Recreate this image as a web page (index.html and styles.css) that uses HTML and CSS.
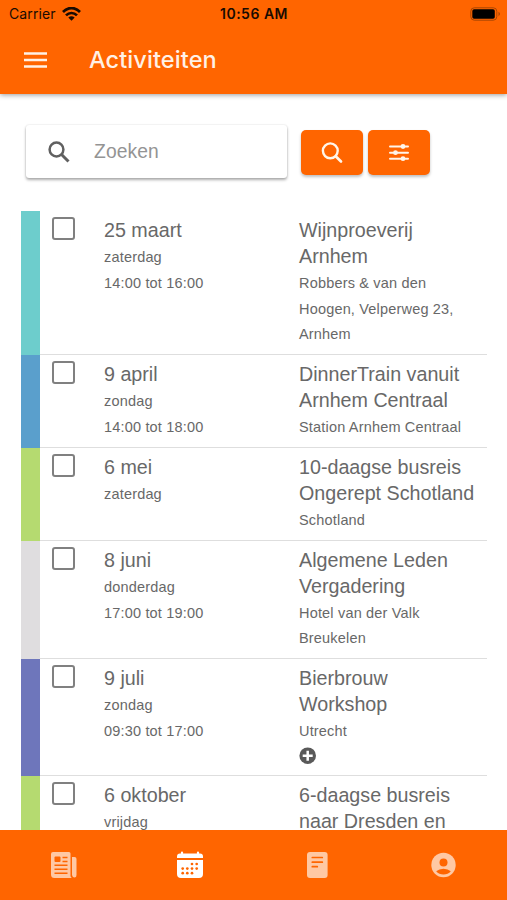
FILE: index.html
```html
<!DOCTYPE html>
<html lang="nl">
<head>
<meta charset="utf-8">
<title>Activiteiten</title>
<link rel="stylesheet" href="styles.css">
</head>
<body>
<div class="app">
  <header class="header">
    <div class="status">
      <div class="carrier"><span class="carrier-name">Carrier</span>
        <svg width="19" height="14" viewBox="0 0 19 14" fill="none" stroke="#190b02" stroke-width="2.700"><path d="M1 5C6-.3 13-.3 18 5M4 8.400C7.200 5.200 11.800 5.200 15 8.400"/><path d="M6.300 10.500Q9.500 7.800 12.700 10.500L9.500 13.800Z" fill="#190b02" stroke="none"/></svg>
      </div>
      <div class="time">10:56 AM</div>
      <svg class="battery" width="31" height="14" viewBox="0 0 31 14"><rect x=".8" y=".8" width="26" height="12.400" rx="3.500" fill="none" stroke="#a84604"/><rect x="2.300" y="2.300" width="22.500" height="9.400" rx="1.800" fill="#000"/><path d="M28.500 4.800q3 2.200 0 4.400z" fill="#a84604"/></svg>
    </div>
    <div class="titlebar">
      <svg width="23" height="16" viewBox="0 0 23 16" stroke="#fff1e6" stroke-width="2.400"><path d="M0 1.500h23M0 8h23M0 14.500h23"/></svg>
      <h1>Activiteiten</h1>
    </div>
  </header>
  <main class="content">
    <div class="search">
      <div class="field">
        <svg width="22" height="22" viewBox="0 0 22 22" fill="none" stroke="#606060" stroke-width="2.500"><circle cx="8.500" cy="8.500" r="6.900"/><path d="M13.300 13.300L20.500 20.500" stroke-width="3"/></svg>
        <span>Zoeken</span>
      </div>
      <div class="button"><svg width="22" height="22" viewBox="0 0 22 22" fill="none" stroke="#fff5e9" stroke-width="2.400"><circle cx="9.300" cy="8.800" r="7.400"/><path d="M14.700 14.200L20 19.500" stroke-width="2.700" stroke-linecap="round"/></svg></div>
      <div class="button"><svg width="20" height="18" viewBox="0 0 20 18" stroke="#fff5e9" fill="#fff5e9" stroke-width="2" stroke-linecap="round"><path d="M1 2.500h18M1 8.700h18M1 14.700h18"/><g stroke="none"><circle cx="14" cy="2.500" r="2.400"/><circle cx="6.500" cy="8.700" r="2.400"/><circle cx="14" cy="14.700" r="2.400"/></g></svg></div>
    </div>
    <div class="list">
      <div class="row"><i class="bar teal"></i><div class="entry"><i class="check"></i>
        <div class="when"><h2>25 maart</h2><p>zaterdag<br>14:00 tot 16:00</p></div>
        <div class="what"><h2>Wijnproeverij<br>Arnhem</h2><p>Robbers &amp; van den<br>Hoogen, Velperweg 23,<br>Arnhem</p></div></div></div>
      <div class="row"><i class="bar blue"></i><div class="entry"><i class="check"></i>
        <div class="when"><h2>9 april</h2><p>zondag<br>14:00 tot 18:00</p></div>
        <div class="what"><h2>DinnerTrain vanuit<br>Arnhem Centraal</h2><p>Station Arnhem Centraal</p></div></div></div>
      <div class="row"><i class="bar green"></i><div class="entry"><i class="check"></i>
        <div class="when"><h2>6 mei</h2><p>zaterdag</p></div>
        <div class="what"><h2>10-daagse busreis<br>Ongerept Schotland</h2><p>Schotland</p></div></div></div>
      <div class="row"><i class="bar gray"></i><div class="entry"><i class="check"></i>
        <div class="when"><h2>8 juni</h2><p>donderdag<br>17:00 tot 19:00</p></div>
        <div class="what"><h2>Algemene Leden<br>Vergadering</h2><p>Hotel van der Valk<br>Breukelen</p></div></div></div>
      <div class="row"><i class="bar purple"></i><div class="entry"><i class="check"></i>
        <div class="when"><h2>9 juli</h2><p>zondag<br>09:30 tot 17:00</p></div>
        <div class="what"><h2>Bierbrouw<br>Workshop</h2><p>Utrecht</p>
          <svg class="plus" width="18" height="18" viewBox="0 0 18 18"><circle cx="8.700" cy="8.700" r="8.300" fill="#595959"/><path d="M8.700 3.700v10M3.700 8.700h10" stroke="#fff" stroke-width="2.500"/></svg></div></div></div>
      <div class="row"><i class="bar green"></i><div class="entry"><i class="check"></i>
        <div class="when"><h2>6 oktober</h2><p>vrijdag</p></div>
        <div class="what"><h2>6-daagse busreis<br>naar Dresden en</h2></div></div></div>
    </div>
  </main>
  <nav class="tabs">
    <div class="tab"><svg width="28" height="28" viewBox="0 0 28 28"><path d="M4 1h16q1.500 0 1.500 1.500V25q0 1.500 1.500 2H5.500Q2 27 2 23.500V3Q2 1 4 1z" fill="#ffc8a3"/><path d="M23 6h2.500q2 0 2 2v16q0 2.500-2 2.500T23 24z" fill="#ffc8a3"/><rect x="5.500" y="5.500" width="6" height="5.500" rx="1" fill="#ff6500"/><path d="M13.500 6.500h5M13.500 10.500h5M5.500 14.200h13M5.500 18.200h13M5.500 22.200h13" stroke="#ff6500" stroke-width="1.500"/></svg></div>
    <div class="tab"><svg width="28" height="28" viewBox="0 0 28 28"><path d="M6 3V1.500M22 3V1.500" stroke="#fff" stroke-width="2.200" stroke-linecap="round"/><path d="M1 7V5.500Q1 2.500 4 2.500h20q3 0 3 3V7zM1 9h26v14q0 4-4 4H5q-4 0-4-4z" fill="#fff"/><g fill="#ff6500"><circle cx="16" cy="13" r="1.350"/><circle cx="20.700" cy="13" r="1.350"/><circle cx="6.700" cy="17.600" r="1.350"/><circle cx="11.300" cy="17.600" r="1.350"/><circle cx="16" cy="17.600" r="1.350"/><circle cx="20.700" cy="17.600" r="1.350"/><circle cx="6.700" cy="22.200" r="1.350"/><circle cx="11.300" cy="22.200" r="1.350"/><circle cx="16" cy="22.200" r="1.350"/></g></svg></div>
    <div class="tab"><svg width="28" height="28" viewBox="0 0 28 28"><rect x="4" y="1" width="20.600" height="26" rx="3" fill="#ffc8a3"/><path d="M9.300 6.500h10M9.300 11.200h10M9.300 15.700h5" stroke="#ff6500" stroke-width="1.700" stroke-linecap="round"/></svg></div>
    <div class="tab"><svg width="28" height="28" viewBox="0 0 28 28"><circle cx="13.500" cy="14" r="12.200" fill="#ffc8a3"/><circle cx="13.500" cy="11.500" r="4" fill="#ff6500"/><path d="M6.200 20.300Q9 17.700 13.500 17.700T20.800 20.300Q18 23.500 13.500 23.500T6.200 20.300z" fill="#ff6500"/></svg></div>
  </nav>
</div>
</body>
</html>
```
FILE: styles.css
```css
* { box-sizing: border-box; }
body { margin: 0; background: #fff; color: #686868; font-family: "Liberation Sans", sans-serif; }
svg { display: block; flex: none; }
h1, h2, p { margin: 0; font-weight: 400; }
.app { height: 900px; display: flex; flex-direction: column; overflow: hidden; }
.header { flex: 0 0 94px; background: #ff6500; box-shadow: 0 1px 5px rgba(0,0,0,.4); }
.status { height: 27px; padding: 0 6px 0 9px; display: grid; grid-template-columns: 1fr auto 1fr; align-items: center; color: #190b02; font-family: Inter, sans-serif; font-size: 14px; }
.carrier { display: flex; gap: 6px; align-items: center; }
.carrier-name { letter-spacing: .1px; }
.time { margin-right: 2px; font-weight: 600; font-size: 14px; letter-spacing: .5px; }
.battery { justify-self: end; }
.titlebar { height: 65px; padding-left: 24px; display: flex; align-items: center; gap: 42px; }
h1 { color: #fff1e6; font: 500 23.500px/30px Inter, sans-serif; letter-spacing: .1px; }
.content { flex: 1; min-height: 0; overflow: hidden; padding: 31px 20px 0 21px; }
.search { display: flex; align-items: center; padding-left: 5px; margin-bottom: 33px; }
.field { width: 261px; height: 53px; margin-right: 14px; padding-left: 22px; display: flex; align-items: center; gap: 24px; border-radius: 3px; font-size: 19.3px; color: #949494; letter-spacing: .1px; box-shadow: 0 2px 3px rgba(0,0,0,.32), 0 0 2px rgba(0,0,0,.14); }
.button { width: 62px; height: 45px; margin: 2px 5px 0 0; display: flex; align-items: center; justify-content: center; border-radius: 5px; background: #ff6500; box-shadow: 0 2px 3px rgba(0,0,0,.25); }
.row { display: flex; }
.bar { width: 19px; flex: none; }
.teal { background: #6dcdcc; }
.blue { background: #5a9fcc; }
.green { background: #b5da70; }
.gray { background: #dfdddf; }
.purple { background: #6e76bb; }
.entry { flex: 1; display: grid; grid-template-columns: 52px 195px 1fr; align-items: start; padding: 7px 0 7.700px 12px; border-bottom: 1px solid #dedede; }
.check { width: 23px; height: 23px; margin-top: -1px; border: 2px solid #808080; border-radius: 3px; }
h2 { font-size: 19.700px; line-height: 25.700px; white-space: nowrap; }
p { font-size: 14.500px; line-height: 25.700px; letter-spacing: .180px; white-space: nowrap; padding-top: 1.400px; margin-bottom: -1.400px; }
.plus { margin: 4px 0 2.200px; }
.tabs { flex: 0 0 70px; padding: 0; display: grid; grid-template-columns: repeat(4, 1fr); align-items: center; background: #ff6500; }
.tab { display: flex; justify-content: center; }
```
